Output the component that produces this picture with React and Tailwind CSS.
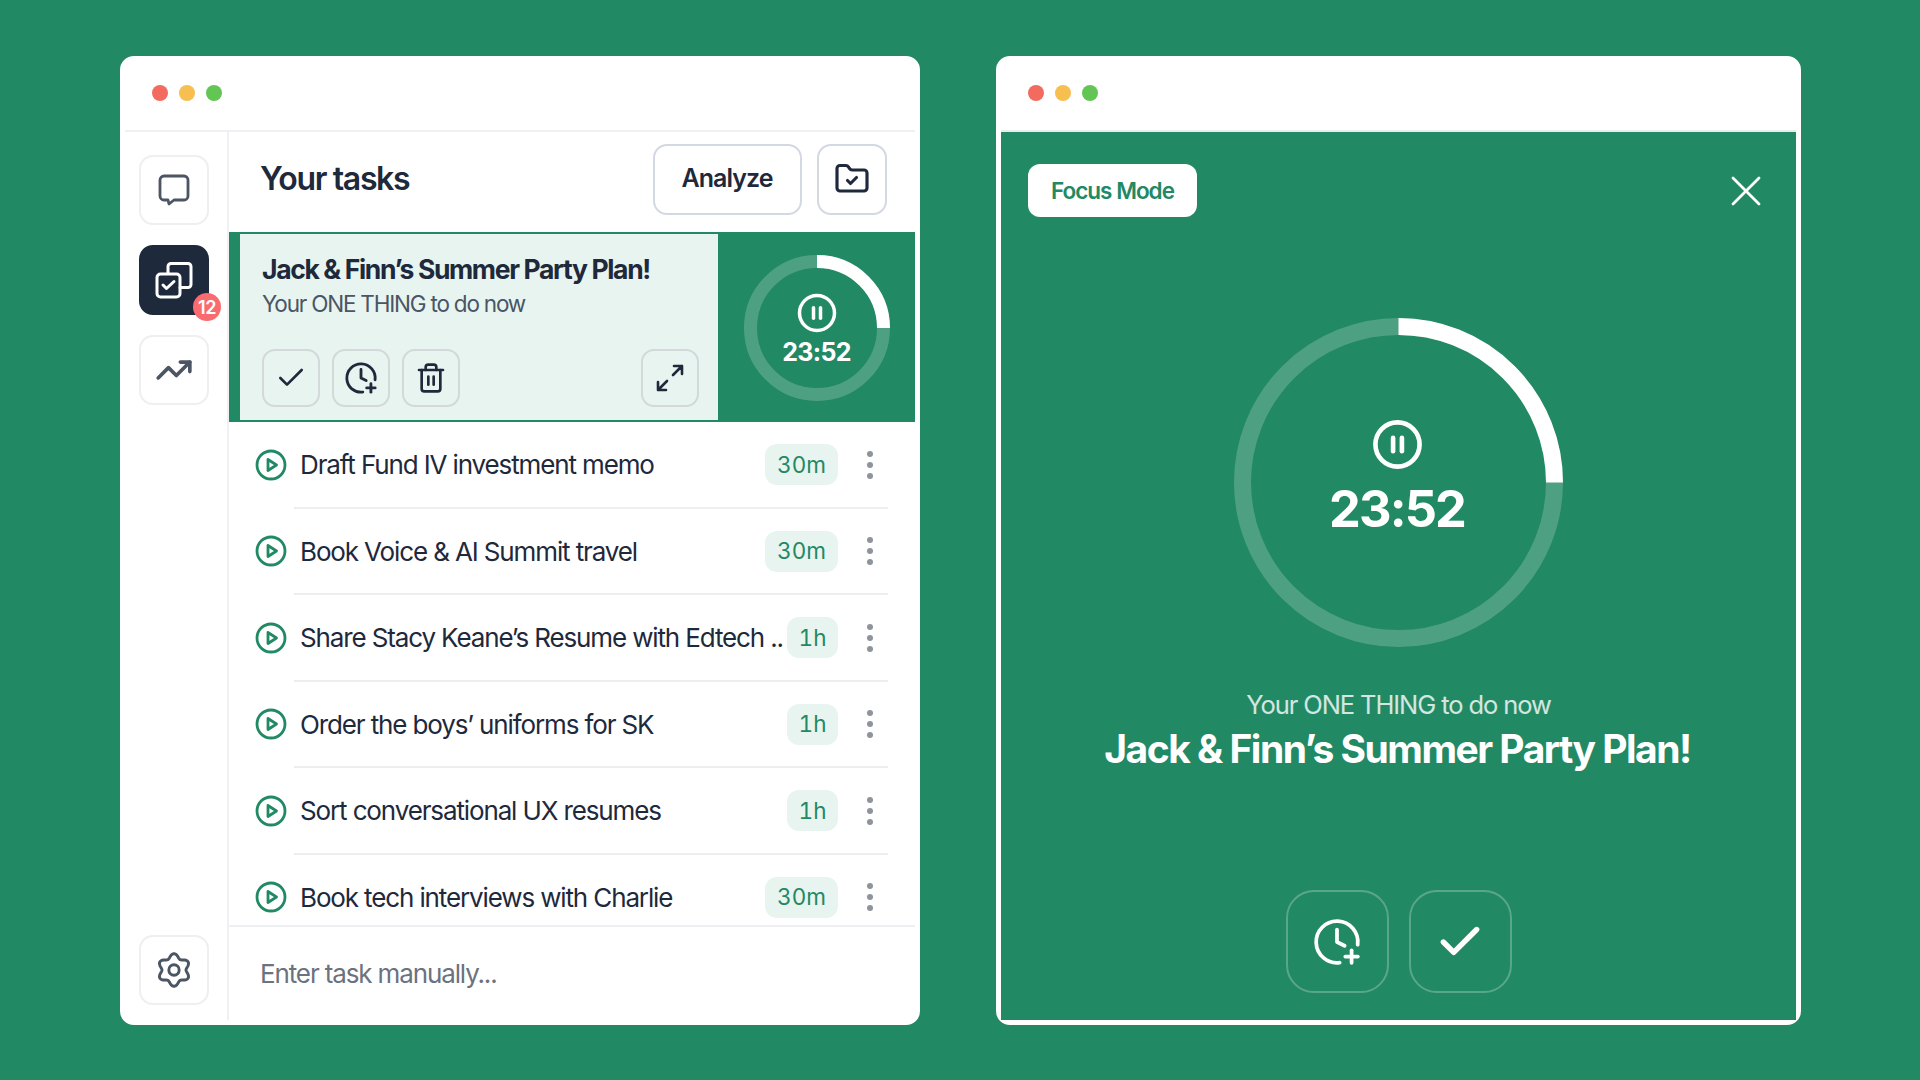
import React from "react";
import { Check, ClockPlus, Trash2, FolderCheck, CirclePause, TrendingUp } from "lucide-react";

const GREEN = "#228965";

const gearPath = (() => {
  const pts = [];
  for (let i = 0; i < 144; i++) {
    const a = (i / 144) * Math.PI * 2 - Math.PI / 2;
    const r = 12.6 + 1.9 * Math.cos(6 * a + Math.PI * 3);
    pts.push(`${(16 + r * Math.cos(a)).toFixed(2)} ${(16 + r * Math.sin(a)).toFixed(2)}`);
  }
  return "M" + pts.join("L") + "Z";
})();

function Dots() {
  return (
    <div className="flex h-[69px] shrink-0 items-center gap-[11px] pb-[5px] pl-[27px]">
      <span className="h-4 w-4 rounded-full bg-[#F26B5E]" />
      <span className="h-4 w-4 rounded-full bg-[#F6BF4F]" />
      <span className="h-4 w-4 rounded-full bg-[#62C554]" />
    </div>
  );
}

function SideBtn({ children, active, badge, className = "" }) {
  return (
    <div
      className={`relative flex h-[70px] w-[70px] items-center justify-center rounded-[14px] border-2 ${
        active ? "border-[#1E293B] bg-[#1E293B]" : "border-[#EFEFF2] bg-white"
      } ${className}`}
    >
      {children}
      {badge && (
        <span className="absolute left-[52px] top-[46px] flex h-7 w-7 items-center justify-center rounded-full bg-[#FA6B6F] text-[18px] font-semibold tracking-[-0.5px] text-white">
          {badge}
        </span>
      )}
    </div>
  );
}

function ActionBtn({ children }) {
  return (
    <div className="flex h-[58px] w-[58px] items-center justify-center rounded-[13px] border-2 border-[#D3D8DA]">
      {children}
    </div>
  );
}

function Ring({ size, stroke, children }) {
  const r = (size - stroke) / 2;
  const c = size / 2;
  return (
    <div className="relative" style={{ width: size, height: size }}>
      <svg width={size} height={size} viewBox={`0 0 ${size} ${size}`}>
        <circle cx={c} cy={c} r={r} fill="none" stroke="#ffffff" strokeOpacity="0.2" strokeWidth={stroke} />
        <path d={`M${c} ${c - r}A${r} ${r} 0 0 1 ${c + r} ${c}`} fill="none" stroke="#ffffff" strokeWidth={stroke} />
      </svg>
      <div className="absolute inset-0 flex flex-col items-center justify-center text-white">{children}</div>
    </div>
  );
}

function PlayIcon() {
  return (
    <svg width="32" height="32" viewBox="0 0 32 32" fill="none" stroke={GREEN} strokeWidth="2.8" strokeLinejoin="round" className="shrink-0">
      <circle cx="16" cy="16" r="14" />
      <path d="M13 10.5l8.5 5.5-8.5 5.5Z" />
    </svg>
  );
}

const tasks = [
  ["Draft Fund IV investment memo", "30m"],
  ["Book Voice & AI Summit travel", "30m"],
  ["Share Stacy Keane’s Resume with Edtech ..", "1h"],
  ["Order the boys’ uniforms for SK", "1h"],
  ["Sort conversational UX resumes", "1h"],
  ["Book tech interviews with Charlie", "30m"],
];

function Row({ title, time }) {
  return (
    <div className="flex h-[86.5px] shrink-0 flex-col">
      <div className="flex flex-1 items-center pl-[26px] pr-[42px] pt-[1px]">
        <PlayIcon />
        <span className="ml-[13px] flex-1 whitespace-nowrap text-[26px] font-normal tracking-[-1.13px] text-[#1E293B]">
          {title}
        </span>
        <span
          className={`flex h-[41px] items-center justify-center rounded-[12px] bg-[#E8F4F0] text-[22.5px] tabular-nums text-[#228965] ${
            time === "1h" ? "w-[51px]" : "w-[73px]"
          }`}
        >
          {time}
        </span>
        <div className="ml-[29px] flex flex-col gap-[5px]">
          <span className="h-[6px] w-[6px] rounded-full bg-[#8E939C]" />
          <span className="h-[6px] w-[6px] rounded-full bg-[#8E939C]" />
          <span className="h-[6px] w-[6px] rounded-full bg-[#8E939C]" />
        </div>
      </div>
      <div className="ml-[65px] mr-[27px] h-[2px] bg-[#EEEEF0]" />
    </div>
  );
}

export default function App() {
  return (
    <div
      className="flex h-[1080px] w-[1920px] gap-[76px] overflow-hidden bg-[#228965] pb-[55px] pl-[120px] pr-[119px] pt-[56px]"
      style={{ fontFamily: "Inter, 'Liberation Sans', sans-serif" }}
    >
      {/* Left window */}
      <div className="flex w-[800px] shrink-0 flex-col rounded-[14px] border-[5px] border-white bg-white">
        <Dots />
        <div className="flex min-h-0 flex-1 border-t-2 border-[#EEF0F4]">
          <aside className="flex w-[104px] shrink-0 flex-col gap-5 border-r-2 border-[#EEF0F4] pb-[15px] pl-[14px] pt-[23px]">
            <SideBtn>
              <svg width="36" height="36" viewBox="0 0 36 36" fill="none" stroke="#4B5563" strokeWidth="2.8" strokeLinejoin="round" strokeLinecap="round">
                <path d="M8 4h20a4 4 0 0 1 4 4v16a4 4 0 0 1-4 4H18l-5 4-1-4H8a4 4 0 0 1-4-4V8a4 4 0 0 1 4-4Z" />
              </svg>
            </SideBtn>
            <SideBtn active badge="12">
              <svg width="38" height="38" viewBox="0 0 38 38" fill="none" stroke="#ffffff" strokeWidth="3" strokeLinejoin="round" strokeLinecap="round">
                <path d="M13 12V5.500a3 3 0 0 1 3-3h17a3 3 0 0 1 3 3v18a3 3 0 0 1-3 3h-8" />
                <rect x="2" y="13" width="23" height="23" rx="3.500" />
                <path d="M8 24l3.500 3.500L19 20.500" />
              </svg>
            </SideBtn>
            <SideBtn>
              <TrendingUp size={38} strokeWidth={2.3} color="#4B5563" />
            </SideBtn>
            <SideBtn className="mt-auto">
              <svg width="36" height="36" viewBox="0 0 32 32" fill="none" stroke="#4B5563" strokeWidth="2.6" strokeLinejoin="round">
                <path d={gearPath} />
                <circle cx="16" cy="16" r="4.600" />
              </svg>
            </SideBtn>
          </aside>

          <main className="flex min-w-0 flex-1 flex-col">
            <header className="flex h-[100px] shrink-0 items-center pb-[6px] pl-[31px] pr-[28px] pt-0">
              <h1 className="flex-1 text-[32px] font-semibold tracking-[-1.35px] text-[#1E293B]">Your tasks</h1>
              <div className="flex h-[71px] w-[149px] items-center justify-center rounded-[14px] border-2 border-[#D4D8E2] pr-[1px] text-[25px] font-semibold tracking-[-0.95px] text-[#1E293B]">
                Analyze
              </div>
              <div className="ml-[15px] flex h-[71px] w-[70px] items-center justify-center rounded-[14px] border-2 border-[#D4D8E2]">
                <FolderCheck size={36} strokeWidth={2.1} color="#1E293B" />
              </div>
            </header>

            <section className="flex h-[190px] shrink-0 bg-[#228965]">
              <div className="ml-[11px] mt-[2px] mb-[2px] flex w-[478px] flex-col bg-[#E8F4F0] pb-[13px] pl-[22px] pr-[19px] pt-[16px]">
                <div className="whitespace-nowrap text-[26.5px] font-bold leading-[38px] tracking-[-1.35px] text-[#1E293B]">
                  Jack &amp; Finn’s Summer Party Plan!
                </div>
                <div className="whitespace-nowrap text-[22.5px] leading-[32px] tracking-[-1.2px] text-[#4B5563]">
                  Your ONE THING to do now
                </div>
                <div className="mt-auto flex gap-[12px]">
                  <ActionBtn>
                    <Check size={32} strokeWidth={2} color="#1E293B" />
                  </ActionBtn>
                  <ActionBtn>
                    <ClockPlus size={34} strokeWidth={2} color="#1E293B" />
                  </ActionBtn>
                  <ActionBtn>
                    <Trash2 size={32} strokeWidth={2} color="#1E293B" />
                  </ActionBtn>
                  <div className="ml-auto">
                    <ActionBtn>
                      <svg width="32" height="32" viewBox="0 0 32 32" fill="none" stroke="#1E293B" strokeWidth="2.600" strokeLinecap="round" strokeLinejoin="round">
                        <path d="M19 13l9-9M20 4h8v8" />
                        <path d="M13 19l-9 9M12 28H4v-8" />
                      </svg>
                    </ActionBtn>
                  </div>
                </div>
              </div>
              <div className="flex flex-1 items-center justify-center pt-[2px]">
                <Ring size={146} stroke={13}>
                  <div className="flex flex-col items-center pt-[3px]">
                    <CirclePause size={42} strokeWidth={2} color="#ffffff" />
                    <span className="mt-[2px] text-[25px] font-bold leading-[32px] tracking-[-0.7px]">23:52</span>
                  </div>
                </Ring>
              </div>
            </section>

            <div className="min-h-0 flex-1 overflow-hidden">
              {tasks.map(([t, d]) => (
                <Row key={t} title={t} time={d} />
              ))}
            </div>

            <footer className="flex h-[95px] shrink-0 items-center border-t-2 border-[#EEEEF3] pl-[31px] text-[26px] tracking-[-1.13px] text-[#6B7280]">
              Enter task manually...
            </footer>
          </main>
        </div>
      </div>

      {/* Right window */}
      <div className="flex w-[805px] shrink-0 flex-col rounded-[14px] border-[5px] border-white bg-white">
        <Dots />
        <div className="flex min-h-0 flex-1 flex-col items-center border-t-2 border-[#E8EEEB] bg-[#228965] text-white">
          <div className="flex w-full items-center justify-between pl-[27px] pr-[35px] pt-[32px]">
            <div className="flex h-[53px] w-[169px] items-center justify-center rounded-[12px] bg-white text-[22.5px] font-semibold tracking-[-1px] text-[#228965]">
              Focus Mode
            </div>
            <svg width="30" height="30" viewBox="0 0 30 30" fill="none" stroke="#ffffff" strokeWidth="2.800" strokeLinecap="round">
              <path d="M2 2l26 26M28 2L2 28" />
            </svg>
          </div>
          <div className="mt-[101px]">
            <Ring size={329} stroke={17}>
              <div className="-mt-[7px] -ml-[3px] flex flex-col items-center">
                <CirclePause size={53} strokeWidth={2.1} color="#ffffff" />
                <span className="mt-[7px] text-[50.5px] font-bold leading-[62px] tracking-[-1.9px]">23:52</span>
              </div>
            </Ring>
          </div>
          <div className="mt-[40px] text-[25.5px] leading-[36px] tracking-[-1.1px] text-white/80">Your ONE THING to do now</div>
          <div className="mt-[3px] -ml-[2px] text-[39px] font-bold leading-[46px] tracking-[-1.5px]">Jack &amp; Finn’s Summer Party Plan!</div>
          <div className="mt-auto flex gap-5 pb-[27px]">
            <div className="flex h-[103px] w-[103px] items-center justify-center rounded-[28px] border-2 border-white/25">
              <ClockPlus size={50} strokeWidth={1.8} color="#ffffff" />
            </div>
            <div className="flex h-[103px] w-[103px] items-center justify-center rounded-[28px] border-2 border-white/25">
              <Check size={50} strokeWidth={2.6} color="#ffffff" />
            </div>
          </div>
        </div>
      </div>
    </div>
  );
}
